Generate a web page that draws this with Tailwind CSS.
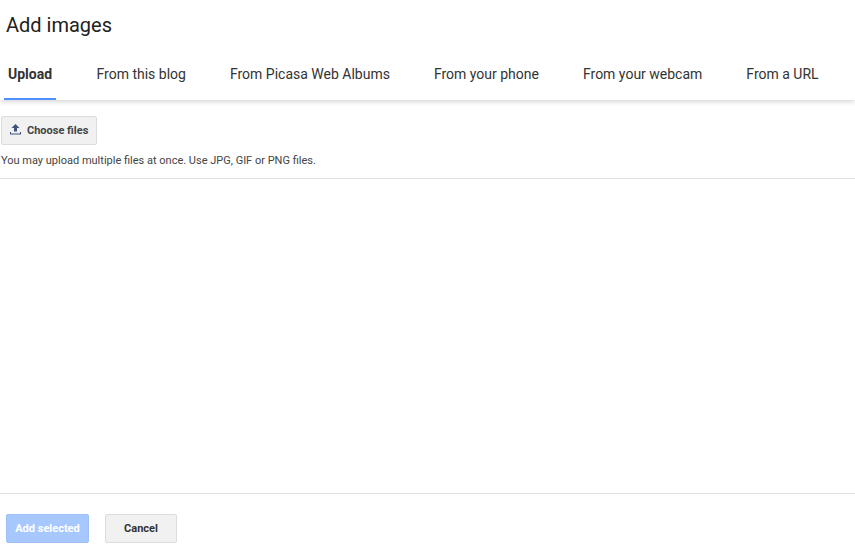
<!DOCTYPE html>
<html lang="en">
<head>
  <meta charset="UTF-8" />
  <title>Add images</title>
  <script src="https://cdn.jsdelivr.net/npm/@tailwindcss/browser@4"></script>
</head>
<body class="w-[855px] h-[551px] overflow-hidden bg-white flex flex-col font-[Roboto,sans-serif] text-[#212121]">

<!-- Header + tabs -->
<header class="h-[100px] shrink-0 flex flex-col shadow-[0_2px_5px_rgba(0,0,0,0.16)] relative">
  <h1 class="pl-[6px] pt-[13px] h-[50px] text-[20px] leading-[24px] font-normal">Add images</h1>
  <nav class="flex pl-[4px] h-[50px] text-[14px]">
    <a class="w-[52px] pl-[4px] h-[50px] pt-[15px] leading-[18px] font-bold text-[#333] border-b-2 border-[#4d90fe]">Upload</a>
    <a class="ml-[40.5px] pt-[15px] leading-[18px] text-[#333]">From this blog</a>
    <a class="ml-[44px] pt-[15px] leading-[18px] text-[#333]">From Picasa Web Albums</a>
    <a class="ml-[44px] pt-[15px] leading-[18px] text-[#333]">From your phone</a>
    <a class="ml-[44px] pt-[15px] leading-[18px] text-[#333]">From your webcam</a>
    <a class="ml-[44px] pt-[15px] leading-[18px] text-[#333]">From a URL</a>
  </nav>
</header>

<!-- Upload panel -->
<main class="flex-1 flex flex-col">
  <div class="h-[79px] shrink-0 border-b border-[#e0e0e0] pl-[1px] pt-[16px]">
    <button class="w-[96px] h-[29px] flex items-center bg-[#f1f1f1] border border-[#dcdcdc] rounded-[2px] pl-[7px] pt-[2px] text-[11px] font-bold text-[#444]">
      <svg class="w-[13px] h-[13px] mr-[5px] mt-[-4px]" viewBox="0 0 13 13"><path d="M6.5 1 L10.5 5 H8 V8.5 H5 V5 H2.5 Z M1 9 H2 V10.5 H11 V9 H12 V11.5 H1 Z" fill="#3f5382"/></svg>
      Choose files
    </button>
    <p class="mt-[8px] text-[11px] leading-[16px] text-[#444]">You may upload multiple files at once. Use JPG, GIF or PNG files.</p>
  </div>
  <div class="flex-1"></div>
  <footer class="h-[58px] shrink-0 border-t border-[#e0e0e0] flex pl-[6px] pt-[20px] gap-[16px]">
    <button class="w-[83px] h-[29px] pt-[2px] bg-[#a6c8ff] border border-[#9dc0fb] rounded-[2px] text-[11px] font-bold text-white">Add selected</button>
    <button class="w-[72px] h-[29px] pt-[2px] bg-[#f1f1f1] border border-[#dcdcdc] rounded-[2px] text-[11px] font-bold text-[#333]">Cancel</button>
  </footer>
</main>

</body>
</html>
